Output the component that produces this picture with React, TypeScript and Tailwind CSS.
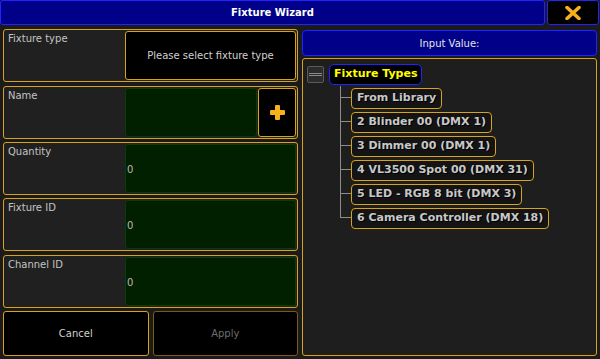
import React from "react";

const font = { fontFamily: '"DejaVu Sans", "Liberation Sans", sans-serif' };

const rows = [
  { label: "Fixture type", kind: "select", gap: "" },
  { label: "Name", kind: "name", gap: "mt-[4px]" },
  { label: "Quantity", kind: "value", gap: "mt-[3px]" },
  { label: "Fixture ID", kind: "value", gap: "mt-[3px]" },
  { label: "Channel ID", kind: "value", gap: "mt-[4px]" },
];

const children = [
  "From Library",
  "2 Blinder 00 (DMX 1)",
  "3 Dimmer 00 (DMX 1)",
  "4 VL3500 Spot 00 (DMX 31)",
  "5 LED - RGB 8 bit (DMX 3)",
  "6 Camera Controller (DMX 18)",
];

function FieldRow({ label, kind, gap }: { label: string; kind: string; gap: string }) {
  return (
    <div className={`${gap} h-[53px] flex rounded-[3px] border border-[#d9a21b] bg-[#202020] p-[1px]`}>
      <div className="flex-1 pl-[3px] pt-[2px] text-[10px] leading-[12px] text-[#c4c4c4]">
        {label}
      </div>
      {kind === "select" && (
        <div className="w-[171px] flex items-center justify-center rounded-[3px] border border-[#d9a21b] bg-black text-[10px] text-[#d0d0d0]">
          Please select fixture type
        </div>
      )}
      {kind === "name" && (
        <div className="w-[171px] flex gap-[1px]">
          <div className="flex-1 rounded-[3px] border border-[#0b3a0b] bg-[#002000]" />
          <div className="w-[38px] flex items-center justify-center rounded-[3px] border border-[#d9a21b] bg-black">
            <svg width="15" height="15" viewBox="0 0 15 15">
              <rect x="5" y="0" width="5" height="15" rx="1" fill="#f5b21a" />
              <rect x="0" y="5" width="15" height="5" rx="1" fill="#f5b21a" />
            </svg>
          </div>
        </div>
      )}
      {kind === "value" && (
        <div className="w-[171px] flex items-center rounded-[3px] border border-[#0b3a0b] bg-[#002000] pl-[1px] pt-[2px] text-[10px] text-[#b8b8b8]">
          0
        </div>
      )}
    </div>
  );
}

function TreeChild({ text, last }: { text: string; last: boolean }) {
  return (
    <div className="h-[24px] flex items-center">
      <div className="w-[11px] self-stretch flex flex-col">
        <div className="h-1/2 border-l border-b border-[#8c8c8c]" />
        <div className={last ? "h-1/2" : "h-1/2 border-l border-[#8c8c8c]"} />
      </div>
      <div className="h-[21px] flex items-center rounded-[4px] border border-[#d9a21b] bg-[#141414] px-[5px] text-[11px] font-bold text-[#c8c8c8] [text-shadow:1px_1px_0_#000]">
        {text}
      </div>
    </div>
  );
}

export default function App() {
  return (
    <div style={font} className="w-[600px] h-[359px] bg-[#1b1b1b] flex flex-col overflow-hidden">
      {/* Title */}
      <div className="h-[26px] flex">
        <div className="w-[545px] flex items-center justify-center rounded-[3px] border border-[#2323ff] bg-[#000088] text-[10px] font-bold text-white">
          Fixture Wizard
        </div>
        <div className="ml-[2px] w-[52px] flex items-center justify-center rounded-[3px] border border-[#2323ff] bg-black">
          <svg width="16" height="14" viewBox="0 0 16 14">
            <path d="M2 1.5 L14 12.5 M14 1.5 L2 12.5" stroke="#f5b21a" strokeWidth="3.6" strokeLinecap="round" />
          </svg>
        </div>
      </div>

      <div className="flex-1 flex gap-[4px] px-[3px] pt-[4px] pb-[3px]">
        {/* Left */}
        <div className="w-[295px] flex flex-col">
          {rows.map((r) => (
            <FieldRow key={r.label} label={r.label} kind={r.kind} gap={r.gap} />
          ))}
          <div className="mt-[3px] h-[45px] flex gap-[4px]">
            <div className="flex-1 flex items-center justify-center rounded-[3px] border border-[#d9a21b] bg-black text-[10px] text-[#d0d0d0]">
              Cancel
            </div>
            <div className="flex-1 flex items-center justify-center rounded-[3px] border border-[#7c5c14] bg-black text-[10px] text-[#6e6e6e]">
              Apply
            </div>
          </div>
        </div>

        {/* Right */}
        <div className="w-[295px] flex flex-col gap-[2px] pt-[1px]">
          <div className="h-[26px] flex items-center justify-center rounded-[4px] border border-[#2323ff] bg-[#000088] text-[10px] text-[#e4e4e4]">
            Input Value:
          </div>
          <div className="flex-1 rounded-[3px] border border-[#d9a21b] bg-[#1e1e1e] pl-[4px] pt-[5px]">
            <div className="flex items-center gap-[5px]">
              <div className="w-[17px] h-[17px] flex flex-col justify-center rounded-[2px] border border-[#5a5a5a] bg-[#2c2c2c] px-[1px]">
                <div className="h-[3px] border-y border-[#8a8a8a]" />
              </div>
              <div className="h-[21px] flex items-center rounded-[5px] border-[1.5px] border-[#2323ff] bg-black px-[4px] text-[11px] font-bold text-[#ffff00]">
                Fixture Types
              </div>
            </div>
            <div className="ml-[33px] mt-[1px] flex flex-col">
              {children.map((c, i) => (
                <TreeChild key={c} text={c} last={i === children.length - 1} />
              ))}
            </div>
          </div>
        </div>
      </div>
    </div>
  );
}
